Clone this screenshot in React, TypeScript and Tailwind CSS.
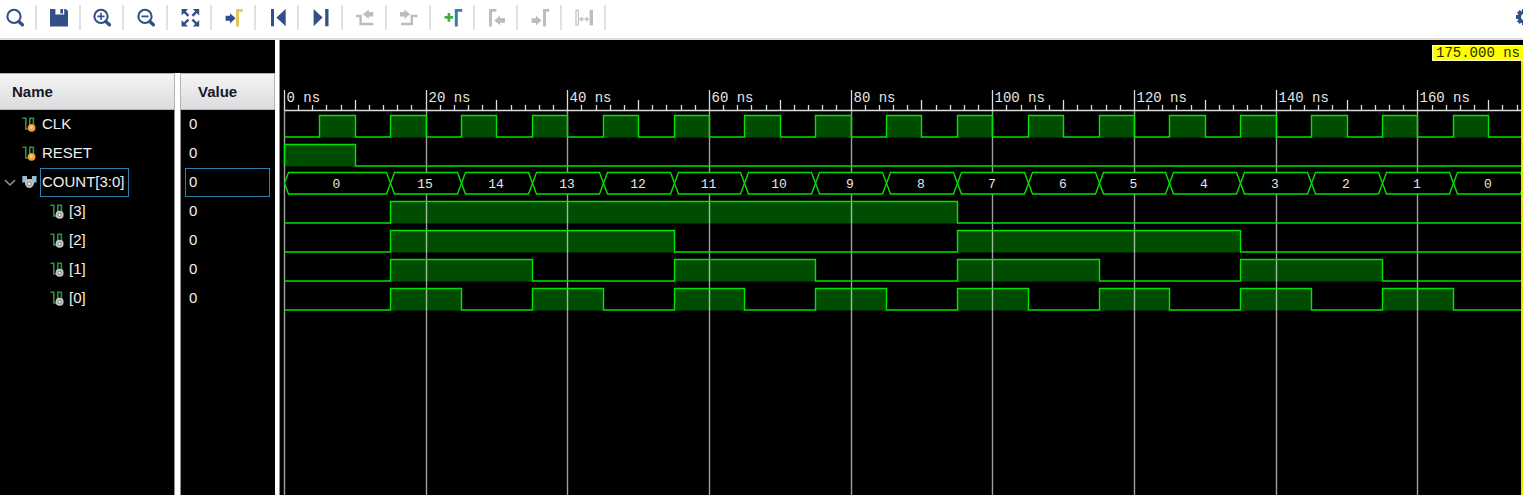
import React from "react";

const NAVY = "#334f87";
const GRAY = "#bdbdbd";

type Tool = { label: string; art: React.ReactNode; off?: boolean };

const lens = (
  <>
    <circle cx="10" cy="9.4" r="6.6" fill="none" stroke={NAVY} strokeWidth="2.1" />
    <path d="M14.8 14.4 L18.4 17.8" stroke={NAVY} strokeWidth="3.4" strokeLinecap="round" />
  </>
);

const tools: Tool[] = [
  { label: "Find", art: lens },
  {
    label: "Save",
    art: <path fill={NAVY} d="M2 2H7.4V7.6H16.2V2H17.8L20 4V19.4H2ZM12.4 2H15V6.4H12.4Z" />,
  },
  {
    label: "Zoom in",
    art: (
      <>
        {lens}
        <path d="M6.4 9.4H13.6M10 5.8V13" stroke={NAVY} strokeWidth="1.6" />
      </>
    ),
  },
  {
    label: "Zoom out",
    art: (
      <>
        {lens}
        <path d="M6.4 9.4H13.6" stroke={NAVY} strokeWidth="1.8" />
      </>
    ),
  },
  {
    label: "Zoom fit",
    art: (
      <>
        <path
          fill={NAVY}
          d="M2.6 2H9L2.6 8.4ZM20.2 2H13.8L20.2 8.4ZM2.6 19.4H9L2.6 13ZM20.2 19.4H13.8L20.2 13Z"
        />
        <path d="M5 4.4L9.4 8.8M17.8 4.4L13.4 8.8M5 17L9.4 12.6M17.8 17L13.4 12.6" stroke={NAVY} strokeWidth="2.4" />
      </>
    ),
  },
  {
    label: "Go to cursor",
    art: (
      <>
        <path fill={NAVY} d="M2.6 8.8H7V6.2L12.6 11.3L7 16.4V13.8H2.6Z" />
        <path fill="#e0c75e" d="M13 2H19.8V4.8H16V19.4H13Z" />
      </>
    ),
  },
  { label: "Go to time 0", art: <path fill={NAVY} d="M4 2H7V19.2H4ZM18.7 2V19.2L9.4 10.6Z" /> },
  { label: "Go to last time", art: <path fill={NAVY} d="M3.6 2L12.6 10.6L3.6 19.2ZM15.2 2H18.5V19.2H15.2Z" /> },
  {
    label: "Previous transition",
    off: true,
    art: (
      <>
        <path d="M2 9H6.6V17H19.4" fill="none" stroke={GRAY} strokeWidth="2.4" />
        <path fill={GRAY} d="M19.3 5V9.6H14.8V12L9 7.3L14.8 2.6V5Z" />
      </>
    ),
  },
  {
    label: "Next transition",
    off: true,
    art: (
      <>
        <path d="M3 17H13.8V9H19.4" fill="none" stroke={GRAY} strokeWidth="2.4" />
        <path fill={GRAY} d="M2 5V9.6H6.4V12L12 7.3L6.4 2.6V5Z" />
      </>
    ),
  },
  {
    label: "Add marker",
    art: (
      <>
        <path d="M2.6 10.4H11.2M6.9 6.1V14.7" stroke="#3fae49" strokeWidth="2.6" />
        <path fill="#337fb5" d="M12.8 2H20.2V4.8H15.8V19.4H12.8Z" />
      </>
    ),
  },
  {
    label: "Previous marker",
    off: true,
    art: (
      <>
        <path fill={GRAY} d="M3 2H10.4V4.8H6V19.4H3Z" />
        <path fill={GRAY} d="M19 11V15.8H14V18.2L8.4 13.4L14 8.6V11Z" />
      </>
    ),
  },
  {
    label: "Next marker",
    off: true,
    art: (
      <>
        <path fill={GRAY} d="M14 2H20.2V4.8H17V19.4H14Z" />
        <path fill={GRAY} d="M2.6 11.2V16H7V18.4L12.4 13.6L7 8.8V11.2Z" />
      </>
    ),
  },
  {
    label: "Swap cursors",
    off: true,
    art: (
      <>
        <path d="M3 3.4H5.4V18H3Z" fill="none" stroke={GRAY} strokeWidth="1.1" />
        <path fill={GRAY} d="M16.6 3H20V18.4H16.6Z" />
        <path d="M7 12.2H15.4M9.4 10L7 12.2L9.4 14.4M13 10L15.4 12.2L13 14.4" fill="none" stroke={GRAY} strokeWidth="1.2" />
      </>
    ),
  },
];

function GearIcon() {
  return (
    <svg viewBox="0 0 18 18" className="size-[18px]">
      {[0, 45, 90, 135].map((a) => (
        <path key={a} d="M7 1H11V17H7Z" fill={NAVY} transform={`rotate(${a} 9 9)`} />
      ))}
      <circle cx="9" cy="9" r="6.2" fill={NAVY} />
      <circle cx="9" cy="9" r="3" fill="#fff" />
    </svg>
  );
}

type Kind = "input" | "bus" | "bit";

function SignalIcon({ kind }: { kind: Kind }) {
  if (kind === "bus") {
    return (
      <svg viewBox="0 0 16 16" className="h-4 w-4 shrink-0">
        <path fill="#94bdd0" d="M0.3 1H5V4H10V1H14.5V7.4H12V9.4H3V7.4H0.3Z" />
        <circle cx="7.4" cy="8.8" r="4.2" fill="#c2c2c2" />
        <circle cx="7.4" cy="8.8" r="2.3" fill="#858585" />
        <circle cx="7.4" cy="8.8" r="1.2" fill="#fff" />
      </svg>
    );
  }
  return (
    <svg viewBox="0 0 16 16" className="h-4 w-4 shrink-0">
      <path d="M0.4 1.2H3.8V12H7.8V1.2H11.4V9" fill="none" stroke="#2f8f43" strokeWidth="1.6" />
      {kind === "input" ? (
        <>
          <circle cx="9.6" cy="10.8" r="3.9" fill="#ef9a3c" />
          <circle cx="9.4" cy="10.4" r="1.8" fill="#ffc583" />
        </>
      ) : (
        <>
          <circle cx="9.6" cy="10.8" r="4" fill="#c6c6c6" />
          <circle cx="9.6" cy="10.8" r="2.2" fill="#8c8c8c" />
          <circle cx="9.6" cy="10.8" r="1.1" fill="#fff" />
        </>
      )}
    </svg>
  );
}

type Signal = { name: string; kind: Kind; high: [number, number][] };

const every = (from: number, len: number, step: number, end: number) => {
  const out: [number, number][] = [];
  for (let t = from; t < end; t += step) out.push([t, t + len]);
  return out;
};

const signals: Signal[] = [
  { name: "CLK", kind: "input", high: every(5, 5, 10, 170) },
  { name: "RESET", kind: "input", high: [[0, 10]] },
  { name: "COUNT[3:0]", kind: "bus", high: [] },
  { name: "[3]", kind: "bit", high: [[15, 95]] },
  { name: "[2]", kind: "bit", high: every(15, 40, 80, 135) },
  { name: "[1]", kind: "bit", high: every(15, 20, 40, 155) },
  { name: "[0]", kind: "bit", high: every(15, 10, 20, 165) },
];

const END = 175;
const busValues = [
  { from: 0, to: 15, value: 0 },
  ...Array.from({ length: 16 }, (_, i) => ({ from: 15 + i * 10, to: 25 + i * 10, value: 15 - i })),
];

const xAt = (t: number) => Math.round(3.9 + t * 7.084) + 0.5;
const rowTop = (i: number) => Math.round(75.7 + i * 28.8) - 0.5;
const SWING = 21.5;
const GREEN = "#00e400";

function Wave({ signal, row }: { signal: Signal; row: number }) {
  const top = rowTop(row);
  const low = top + SWING;
  let d = `M${xAt(0)} ${low}`;
  signal.high.forEach(([a, b]) => {
    d += `H${xAt(a)}V${top}H${xAt(b)}V${low}`;
  });
  d += `H${xAt(END)}`;
  return <path d={d} fill="none" stroke={GREEN} strokeWidth="1.4" />;
}

function Bus({ row }: { row: number }) {
  const top = rowTop(row);
  const mid = top + SWING / 2;
  const low = top + SWING;
  return (
    <g>
      {busValues.map(({ from, to, value }) => {
        const a = xAt(from);
        const b = xAt(to);
        return (
          <g key={from}>
            <path
              d={`M${a} ${mid}L${a + 4} ${top}H${b - 4}L${b} ${mid}L${b - 4} ${low}H${a + 4}Z`}
              fill="#000"
              stroke={GREEN}
              strokeWidth="1.4"
            />
            <text x={(a + b) / 2 - 1} y={mid + 5} textAnchor="middle" fontSize="13" fill="#e6e6e6">
              {value}
            </text>
          </g>
        );
      })}
    </g>
  );
}

function WaveView() {
  const ticks = Array.from({ length: 88 }, (_, i) => i * 2);
  const tens = Array.from({ length: 18 }, (_, i) => i * 10);
  const majors = tens.filter((t) => t % 20 === 0 && t <= 160);
  return (
    <svg width="1243" height="100%" className="block font-['Liberation_Mono',monospace]" role="img" aria-label="Waveforms">
      {signals.map((s, i) =>
        s.high.map(([a, b]) => (
          <rect key={s.name + a} x={xAt(a)} y={rowTop(i)} width={xAt(b) - xAt(a)} height={SWING + 0.5} fill="#004c00" />
        ))
      )}
      {majors.map((t) => (
        <line key={t} x1={xAt(t)} x2={xAt(t)} y1="70" y2="100%" stroke="#fff" strokeOpacity="0.62" strokeWidth="1.4" />
      ))}
      <path
        d={
          `M${xAt(0)} 70.5H${xAt(END)}` +
          ticks.map((t) => `M${xAt(t)} 65V70`).join("") +
          tens.map((t) => `M${xAt(t)} 60V70`).join("") +
          majors.map((t) => `M${xAt(t)} 50V70`).join("")
        }
        stroke="#dcdcdc"
        strokeWidth="1.3"
      />
      {majors.map((t) => (
        <text key={t} x={xAt(t) + 2} y="62" fontSize="14" fill="#e6e6e6">
          {t} ns
        </text>
      ))}
      {signals.map((s, i) => (s.kind === "bus" ? <Bus key={s.name} row={i} /> : <Wave key={s.name} signal={s} row={i} />))}
    </svg>
  );
}

const headCell = "flex h-[37px] items-center border border-[#b4b4b4] bg-linear-to-b from-[#f5f5f5] to-[#dcdcde] text-left font-bold text-[#16162a]";

const indent: Record<Kind, string> = { input: "pl-[22px]", bus: "pl-1", bit: "pl-[50px]" };

export default function App() {
  return (
    <div className="flex h-screen flex-col overflow-hidden bg-black font-['Liberation_Sans',Arial,sans-serif] text-[15px] leading-5">
      <header className="flex h-10 shrink-0 justify-between overflow-hidden border-b-2 border-[#dedede] bg-white">
        <div className="-ml-[7px] grid w-[613px] shrink-0 grid-cols-[repeat(14,1fr)]">
          {tools.map((t) => (
            <div key={t.label} className="mt-[5px] flex h-[25px] items-center justify-center border-r-2 border-[#e0e0e0] pl-0.5">
              <button type="button" aria-label={t.label} disabled={t.off}>
                <svg viewBox="0 0 22 22" className="block size-[22px]">
                  {t.art}
                </svg>
              </button>
            </div>
          ))}
        </div>
        <button type="button" aria-label="Settings" className="-mr-[10px] mt-2 h-[18px] shrink-0">
          <GearIcon />
        </button>
      </header>

      <main className="flex min-h-0 flex-1">
        <section className="flex w-[280px] shrink-0 flex-col border-r border-[#8c8c8c]">
          <div className="flex min-h-0 flex-1 flex-col border-r-4 border-white pt-[33px]">
            <table className="w-full table-fixed border-separate border-spacing-0 text-[#f0f0f0]">
              <thead>
                <tr>
                  <th scope="col" className="w-[180px] border-r-[5px] border-white p-0">
                    <div className={`${headCell} border-l-0 pl-3`}>Name</div>
                  </th>
                  <th scope="col" className="p-0">
                    <div className={`${headCell} pl-[17px]`}>Value</div>
                  </th>
                </tr>
              </thead>
              <tbody>
                {signals.map((s) => (
                  <tr key={s.name}>
                    <td className="h-[29px] border-r-[5px] border-white p-0">
                      <div className={`flex h-[29px] items-center border-r border-[#8c8c8c] ${indent[s.kind]}`}>
                        {s.kind === "bus" && (
                          <button type="button" aria-label="Collapse COUNT[3:0]" className="mr-1.5 w-3">
                            <svg viewBox="0 0 12 12" className="block size-3">
                              <path d="M1 3.2L6 8L11 3.2" fill="none" stroke="#8c8c8c" strokeWidth="1.6" />
                            </svg>
                          </button>
                        )}
                        <SignalIcon kind={s.kind} />
                        {s.kind === "bus" ? (
                          <span className="ml-0.5 flex h-[29px] items-center border border-[#2f7fae] pb-px pl-px pr-[3px]">{s.name}</span>
                        ) : (
                          <span className={`pb-px ${s.kind === "bit" ? "ml-[3px]" : "ml-1"}`}>{s.name}</span>
                        )}
                      </div>
                    </td>
                    <td className="h-[29px] border-l border-[#8c8c8c] p-0">
                      <div className={`ml-1 mr-[5px] flex h-[29px] items-center border pb-px pl-[3px] ${s.kind === "bus" ? "border-[#2f7fae]" : "border-transparent"}`}>
                        0
                      </div>
                    </td>
                  </tr>
                ))}
              </tbody>
            </table>
            <div className="flex flex-1">
              <div className="w-[180px] border-r-[5px] border-white">
                <div className="h-full border-r border-[#8c8c8c]" />
              </div>
              <div className="flex-1 border-l border-[#8c8c8c]" />
            </div>
          </div>
        </section>

        <section className="relative min-w-0 flex-1 overflow-hidden">
          <WaveView />
          <div className="absolute bottom-0 right-0 top-1.5 w-0.5 bg-[#e6e600]" />
          <div className="absolute right-0 top-[5px] border border-r-0 border-[#ffffb0] bg-[#ffff00] px-[3px] font-['Liberation_Mono',monospace] text-[14px] leading-[14px] text-[#2a2a00]">
            175.000 ns
          </div>
        </section>
      </main>
    </div>
  );
}
